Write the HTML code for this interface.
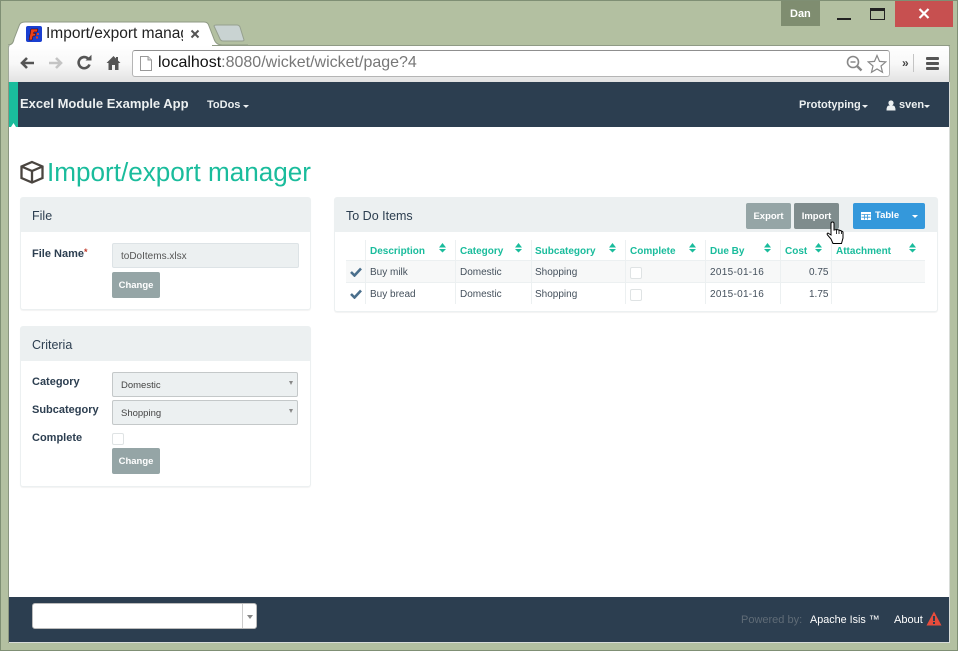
<!DOCTYPE html>
<html><head><meta charset="utf-8"><title>Import/export manager</title>
<style>
html,body{margin:0;padding:0}
body{width:958px;height:651px;position:relative;overflow:hidden;background:#b3c0a1;font-family:"Liberation Sans",sans-serif;color:#2c3e50}
.a{position:absolute;white-space:nowrap}
.box{position:absolute;box-sizing:border-box}
.panel{position:absolute;box-sizing:border-box;background:#fff;border:1px solid #ecf0f1;border-radius:3px;box-shadow:0 1px 1px rgba(0,0,0,.05)}
.ph{position:absolute;left:0;top:0;right:0;height:34px;background:#ecf0f1}
.lbl{font-size:11px;font-weight:bold;color:#2c3e50}
.btn{position:absolute;box-sizing:border-box;background:#95a5a6;color:#fff;font-size:9.5px;font-weight:bold;text-align:center;border-radius:2px;line-height:28px;height:26px}
.sel{position:absolute;box-sizing:border-box;left:112px;width:186px;height:25px;background:#ecf0f1;border:1px solid #c4c8c9;border-radius:2px;font-size:9.5px;color:#444;line-height:25px;padding-left:8px}
.sel i{position:absolute;right:4px;top:8px;width:0;height:0;border:2.5px solid transparent;border-top:4px solid #888}
.th{position:absolute;top:246px;font-size:10px;font-weight:bold;color:#1abc9c;white-space:nowrap}
.td{position:absolute;font-size:10px;color:#44505c;white-space:nowrap}
.v{position:absolute;top:240px;width:1px;height:64px;background:#ecf0f1}
.cb{position:absolute;box-sizing:border-box;width:12px;height:12px;border:1px solid #dfe3e4;border-radius:2px;background:#fff}
.car{position:absolute;width:0;height:0;border-left:3px solid transparent;border-right:3px solid transparent;border-top:3px solid #ecf0f1}
</style></head>
<body>
<!-- window frame -->
<div class="box" style="left:0;top:0;width:958px;height:651px;border:1px solid #7f8f74"></div>
<div class="box" style="left:781px;top:1px;width:39px;height:25px;background:#7f8d70"></div>
<div class="a" style="left:790px;top:8px;font-size:11px;font-weight:bold;color:#fff">Dan</div>
<div class="box" style="left:837px;top:18px;width:14px;height:2px;background:#222"></div>
<div class="box" style="left:870px;top:8px;width:15px;height:12px;border:1px solid #222;border-top:3px solid #222"></div>
<div class="box" style="left:895px;top:1px;width:58px;height:26px;background:#c75050"></div>
<svg class="a" style="left:918px;top:8px" width="12" height="11" viewBox="0 0 12 11"><path d="M1.5 1L10.5 10M10.5 1L1.5 10" stroke="#fff" stroke-width="2.2" fill="none"/></svg>
<!-- tabs -->
<svg class="a" style="left:8px;top:20px" width="240" height="28" viewBox="0 0 240 28">
<path d="M0 27V25Q5 25 6 19L11 6Q12 2 17 2H196Q200 2 201 6L206 19Q208 25 214 25H240V27Z" fill="#fff" stroke="#8f9a85" stroke-width="1"/>
<path d="M206 6Q206 5 209 5H229Q231 5 232 7L236 20Q236 21 234 21H215Q213 21 212 19Z" fill="#c9d3d2" stroke="#96a08f" stroke-width="1"/>
</svg>
<div class="box" style="left:8px;top:45px;width:942px;height:37px;background:linear-gradient(#fff,#f8f8f8 50%,#e2e2e2);border-radius:3px 3px 0 0;border:1px solid #a0a89a;border-width:0 1px 0 1px"></div>
<div class="box" style="left:212px;top:45px;width:738px;height:1px;background:#8f9a85"></div>
<div class="box" style="left:26px;top:26px;width:16px;height:16px;background:#1a3fd0;border-radius:2px"></div>
<svg class="a" style="left:26px;top:26px" width="16" height="16" viewBox="0 0 16 16"><path d="M5 3H12L11 6H8L7.5 7.5H10L9 10H7L6 14H3Z" fill="#e8401c" stroke="#300" stroke-width=".5"/><rect x="11" y="7" width="2" height="2" fill="#e8401c"/><rect x="10" y="10.5" width="2" height="2" fill="#e8401c"/></svg>
<div class="a" style="left:46px;top:25px;width:137px;overflow:hidden;font-size:15.5px;color:#222">Import/export manag</div>
<svg class="a" style="left:190px;top:29px" width="10" height="10" viewBox="0 0 10 10"><path d="M1.5 1.5L8.5 8.5M8.5 1.5L1.5 8.5" stroke="#555" stroke-width="2" fill="none"/></svg>
<!-- toolbar icons -->
<svg class="a" style="left:18px;top:55px" width="18" height="16" viewBox="0 0 18 16"><path d="M16 8H4M9 3L4 8L9 13" stroke="#555" stroke-width="2.6" fill="none"/></svg>
<svg class="a" style="left:47px;top:55px" width="18" height="16" viewBox="0 0 18 16"><path d="M2 8H14M9 3L14 8L9 13" stroke="#c4c4c4" stroke-width="2.6" fill="none"/></svg>
<svg class="a" style="left:76px;top:54px" width="17" height="17" viewBox="0 0 17 17"><path d="M13.5 10.5A5.6 5.6 0 1 1 12 4.5" stroke="#555" stroke-width="2.6" fill="none"/><path d="M9.5 6.5H15.5V0.8Z" fill="#555"/></svg>
<svg class="a" style="left:106px;top:55px" width="15" height="16" viewBox="0 0 15 16"><path d="M7.5 1L0.5 8H2.5V15H6V10H9V15H12.5V8H14.5L12 5.5V2H10V3.5Z" fill="#555"/></svg>
<div class="box" style="left:132px;top:50px;width:758px;height:27px;background:#fff;border:1px solid #b5b5b5;border-top-color:#8f8f8f;border-radius:3px"></div>
<svg class="a" style="left:140px;top:56px" width="12" height="15" viewBox="0 0 12 15"><path d="M.5.5H8L11.5 4V14.5H.5Z" fill="#fff" stroke="#999"/><path d="M8 .5V4H11.5" fill="#ddd" stroke="#999"/></svg>
<div class="a" style="left:158px;top:54px;font-size:16px;color:#777"><span style="color:#111">localhost</span>:8080/wicket/wicket/page?4</div>
<svg class="a" style="left:846px;top:55px" width="17" height="17" viewBox="0 0 17 17"><circle cx="7" cy="7" r="5.5" fill="none" stroke="#888" stroke-width="1.6"/><path d="M4.5 7H9.5" stroke="#888" stroke-width="1.5"/><path d="M11 11L15.5 15.5" stroke="#888" stroke-width="2.4"/></svg>
<svg class="a" style="left:867px;top:54px" width="20" height="20" viewBox="0 0 20 20"><path d="M10 1.5L12.5 7.4L18.8 7.9L14 12L15.500 18.300L10 15L4.500 18.300L6 12L1.200 7.900L7.500 7.400Z" fill="#fff" stroke="#888" stroke-width="1.2"/></svg>
<div class="a" style="left:902px;top:56px;font-size:12px;font-weight:bold;color:#444">»</div>
<div class="box" style="left:913px;top:54px;width:1px;height:18px;background:#c4c4c4"></div>
<div class="box" style="left:926px;top:57px;width:13px;height:3px;background:#555;border-radius:1px"></div>
<div class="box" style="left:926px;top:62px;width:13px;height:3px;background:#555;border-radius:1px"></div>
<div class="box" style="left:926px;top:67px;width:13px;height:3px;background:#555;border-radius:1px"></div>
<!-- page -->
<div class="box" style="left:9px;top:82px;width:940px;height:560px;background:#fff"></div>
<div class="box" style="left:9px;top:82px;width:940px;height:45px;background:#2c3e50"></div>
<div class="box" style="left:9px;top:82px;width:9px;height:45px;background:#1abc9c"></div>
<div class="box" style="left:11px;top:123px;width:5px;height:4px;background:#fff;clip-path:polygon(50% 0,100% 100%,0 100%)"></div>
<div class="a" style="left:20px;top:96px;font-size:13px;font-weight:bold;color:#ecf0f1">Excel Module Example App</div>
<div class="a" style="left:207px;top:99px;font-size:11px;font-weight:bold;color:#ecf0f1">ToDos</div>
<div class="car" style="left:243px;top:105px"></div>
<div class="a" style="left:799px;top:99px;font-size:11px;font-weight:bold;color:#ecf0f1">Prototyping</div>
<div class="car" style="left:862px;top:105px"></div>
<svg class="a" style="left:886px;top:100px" width="10" height="11" viewBox="0 0 10 11"><circle cx="5" cy="3" r="2.6" fill="#ecf0f1"/><path d="M.5 10.500Q.5 5.500 3 5.500H7Q9.500 5.500 9.500 10.500Z" fill="#ecf0f1"/></svg>
<div class="a" style="left:899px;top:99px;font-size:11px;font-weight:bold;color:#ecf0f1">sven</div>
<div class="car" style="left:924px;top:105px"></div>
<!-- title -->
<svg class="a" style="left:20px;top:160px" width="24" height="24" viewBox="0 0 24 24"><path d="M12 2L22.500 6.500V18L12 22.500L1.500 18V6.500Z M1.500 6.500L12 11L22.500 6.500 M12 11V22.500" fill="none" stroke="#4a4540" stroke-width="2.3"/></svg>
<div class="a" style="left:47px;top:157px;font-size:26.1px;color:#1abc9c">Import/export manager</div>
<!-- File panel -->
<div class="panel" style="left:20px;top:197px;width:291px;height:113px"><div class="ph"></div></div>
<div class="a" style="left:32px;top:209px;font-size:12.5px;color:#2c3e50">File</div>
<div class="a lbl" style="left:32px;top:247px">File Name<span style="color:#c0392b;font-size:9px;vertical-align:2px">*</span></div>
<div class="box" style="left:112px;top:243px;width:187px;height:25px;background:#ecf0f1;border:1px solid #dde3e6;border-radius:2px;font-size:10px;color:#555;line-height:25px;padding-left:8px">toDoItems.xlsx</div>
<div class="btn" style="left:112px;top:272px;width:48px">Change</div>
<!-- Criteria -->
<div class="panel" style="left:20px;top:326px;width:291px;height:161px"><div class="ph"></div></div>
<div class="a" style="left:32px;top:338px;font-size:12.5px;color:#2c3e50">Criteria</div>
<div class="a lbl" style="left:32px;top:376px">Category</div>
<div class="sel" style="top:372px">Domestic<i></i></div>
<div class="a lbl" style="left:32px;top:404px">Subcategory</div>
<div class="sel" style="top:400px">Shopping<i></i></div>
<div class="a lbl" style="left:32px;top:432px">Complete</div>
<div class="cb" style="left:112px;top:433px"></div>
<div class="btn" style="left:112px;top:448px;width:48px">Change</div>
<!-- table panel -->
<div class="panel" style="left:334px;top:197px;width:604px;height:115px"><div class="ph"></div></div>
<div class="a" style="left:346px;top:209px;font-size:12.5px;color:#2c3e50">To Do Items</div>
<div class="btn" style="left:746px;top:203px;width:45px;background:#95a5a6">Export</div>
<div class="btn" style="left:794px;top:203px;width:45px;background:#7f8c8d">Import</div>
<div class="btn" style="left:853px;top:203px;width:72px;background:#3498db;text-align:left;padding-left:22px;line-height:26px">Table</div>
<svg class="a" style="left:861px;top:212px" width="10" height="8" viewBox="0 0 10 8"><path d="M0 0H10V8H0Z" fill="#fff"/><path d="M.5 2.500H9.500M.5 5.200H9.500M3.500 2.500V7.500M6.500 2.500V7.500" stroke="#3498db" stroke-width=".8"/></svg>
<div class="car" style="left:912px;top:215px;border-top-color:#fff"></div>
<!-- table -->
<div class="box" style="left:346px;top:261px;width:579px;height:22px;background:#f7f8f8"></div>
<div class="box" style="left:346px;top:260px;width:579px;height:1px;background:#ecf0f1"></div>
<div class="box" style="left:346px;top:282px;width:579px;height:1px;background:#ecf0f1"></div>
<div class="v" style="left:365px"></div><div class="v" style="left:455px"></div><div class="v" style="left:531px"></div><div class="v" style="left:625px"></div><div class="v" style="left:705px"></div><div class="v" style="left:780px"></div><div class="v" style="left:831px"></div>
<div class="th" style="left:370px">Description</div><div class="th" style="left:460px">Category</div><div class="th" style="left:535px">Subcategory</div><div class="th" style="left:630px">Complete</div><div class="th" style="left:710px">Due By</div><div class="th" style="left:785px">Cost</div><div class="th" style="left:836px">Attachment</div>
<svg class="a" style="left:0;top:0" width="958" height="260" viewBox="0 0 958 260" fill="#1abc9c">
<path d="M439 247.500L442.500 243L446 247.500ZM439 249H446L442.500 252.500Z"/>
<path d="M515 247.500L518.500 243L522 247.500ZM515 249H522L518.500 252.500Z"/>
<path d="M609 247.500L612.500 243L616 247.500ZM609 249H616L612.500 252.500Z"/>
<path d="M689 247.500L692.500 243L696 247.500ZM689 249H696L692.500 252.500Z"/>
<path d="M764 247.500L767.500 243L771 247.500ZM764 249H771L767.500 252.500Z"/>
<path d="M815 247.500L818.500 243L822 247.500ZM815 249H822L818.500 252.500Z"/>
<path d="M909 247.500L912.500 243L916 247.500ZM909 249H916L912.500 252.500Z"/>
</svg>
<svg class="a" style="left:350px;top:267px" width="12" height="10" viewBox="0 0 12 10"><path d="M1 5L4.500 8.500L11 1.500" stroke="#4a6f8c" stroke-width="2.600" fill="none"/></svg>
<svg class="a" style="left:350px;top:289px" width="12" height="10" viewBox="0 0 12 10"><path d="M1 5L4.500 8.500L11 1.500" stroke="#4a6f8c" stroke-width="2.600" fill="none"/></svg>
<div class="td" style="left:370px;top:267px">Buy milk</div><div class="td" style="left:460px;top:267px">Domestic</div><div class="td" style="left:535px;top:267px">Shopping</div><div class="cb" style="left:630px;top:267px"></div><div class="td" style="left:710px;top:267px;letter-spacing:.3px">2015-01-16</div><div class="td" style="left:809px;top:267px">0.75</div>
<div class="td" style="left:370px;top:289px">Buy bread</div><div class="td" style="left:460px;top:289px">Domestic</div><div class="td" style="left:535px;top:289px">Shopping</div><div class="cb" style="left:630px;top:289px"></div><div class="td" style="left:710px;top:289px;letter-spacing:.3px">2015-01-16</div><div class="td" style="left:809px;top:289px">1.75</div>
<!-- cursor -->
<svg class="a" style="left:826px;top:221px" width="20" height="24" viewBox="0 0 20 24"><path d="M5 2.500Q5 1 6.500 1Q8 1 8 2.500V9L10.500 8.500L13 9L15.500 10L17 11V17L15.500 22.500H7L5 18L1.500 14Q0.500 12.500 2 12L5 14Z" fill="#fff" stroke="#000" stroke-width="1"/><path d="M10.500 9V13M13 9.500V13M15.500 10.500V13" stroke="#000" stroke-width=".8"/></svg>
<!-- footer -->
<div class="box" style="left:9px;top:597px;width:940px;height:45px;background:#2c3e50"></div>
<div class="box" style="left:9px;top:642px;width:941px;height:1px;background:#d8dcd8"></div>
<div class="box" style="left:949px;top:82px;width:1px;height:561px;background:#d8dcd8"></div>
<div class="box" style="left:8px;top:82px;width:1px;height:561px;background:#8a9580"></div>
<div class="box" style="left:32px;top:603px;width:225px;height:26px;background:#fff;border:1px solid #bbb;border-radius:3px"></div>
<div class="box" style="left:242px;top:604px;width:1px;height:24px;background:#ccc"></div>
<div class="box" style="left:247px;top:615px;width:0;height:0;border:3px solid transparent;border-top:4px solid #888"></div>
<div class="a" style="left:741px;top:614px;font-size:11px;color:#5f6b76">Powered by:</div>
<div class="a" style="left:810px;top:614px;font-size:10.800px;color:#fff">Apache Isis ™</div>
<div class="a" style="left:894px;top:614px;font-size:11px;color:#fff">About</div>
<svg class="a" style="left:926px;top:611px" width="16" height="15" viewBox="0 0 16 15"><path d="M8 .5L15.500 14.500H.5Z" fill="#e74c3c"/><rect x="7" y="5" width="2" height="5" fill="#2c3e50"/><rect x="7" y="11" width="2" height="2" fill="#2c3e50"/></svg>
</body></html>
